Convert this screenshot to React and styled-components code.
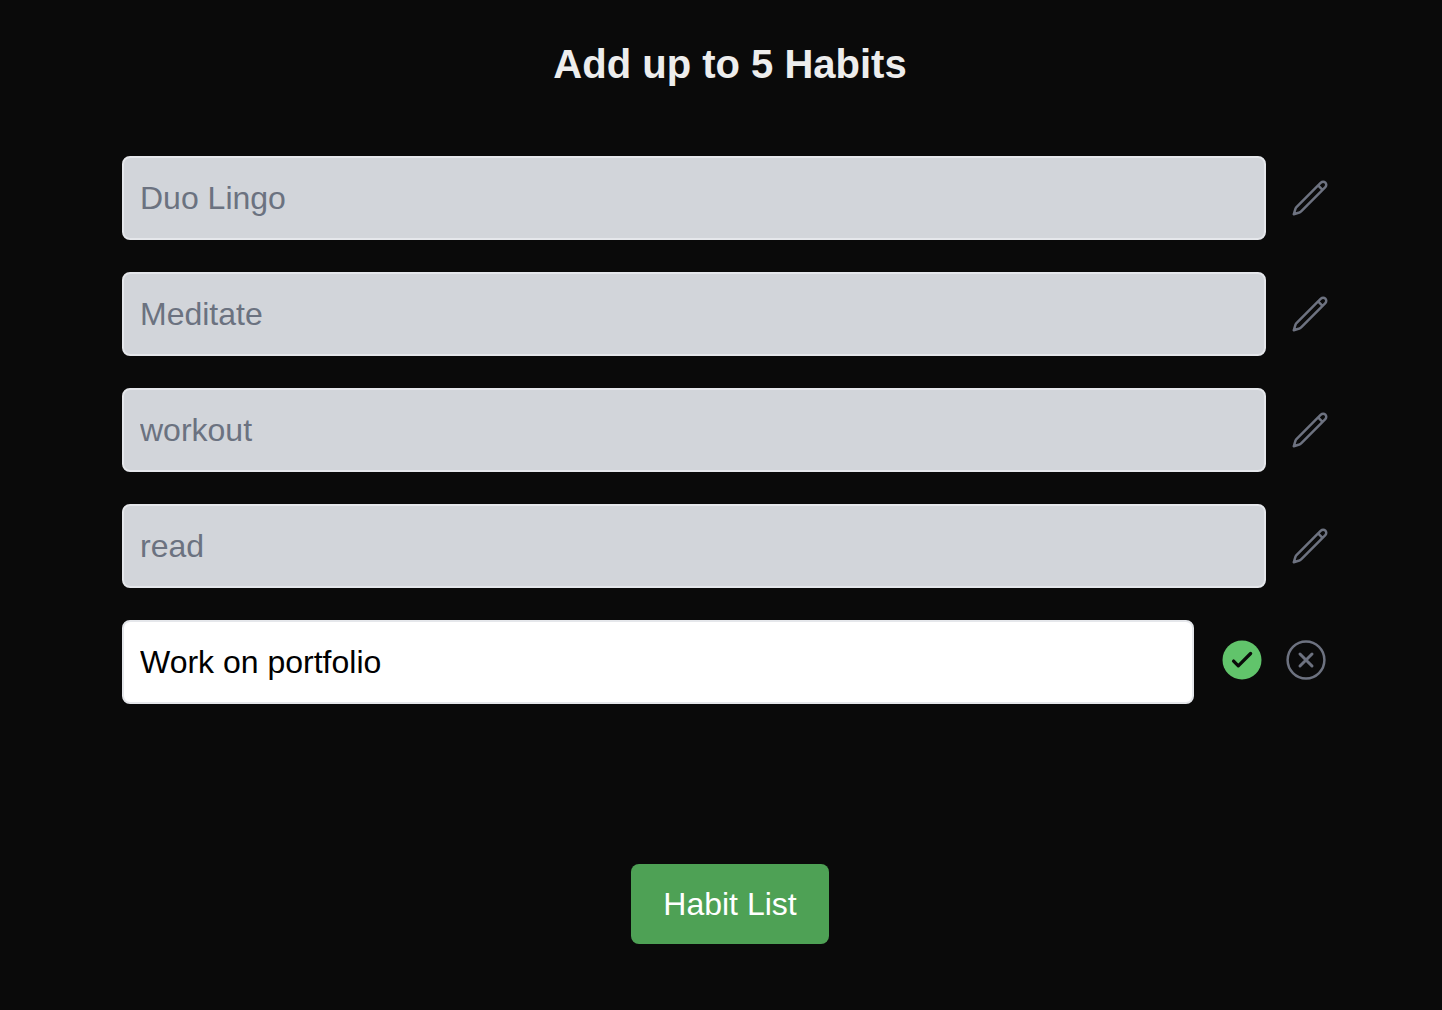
import React, { useState } from "react";
import styled, { createGlobalStyle } from "styled-components";

const GlobalStyle = createGlobalStyle`
  *, *::before, *::after { box-sizing: border-box; }
  body {
    margin: 0;
    background: #0a0a0a;
    color: #ededed;
    font-family: "Liberation Sans", Arial, Helvetica, sans-serif;
  }
`;

const Page = styled.main`
  min-height: 100vh;
  display: flex;
  flex-direction: column;
  align-items: center;
  padding: 36px 104px 64px 122px;
`;

const Title = styled.h1`
  margin: 0;
  font-size: 40px;
  line-height: 56px;
  font-weight: 700;
`;

const HabitList = styled.ul`
  width: 100%;
  margin: 64px 0 160px;
  padding: 0;
  list-style: none;
  display: flex;
  flex-direction: column;
  gap: 32px;
`;

const HabitRow = styled.li`
  display: flex;
  align-items: center;
  gap: 16px;
`;

const HabitInput = styled.input`
  flex: 1;
  min-width: 0;
  height: 84px;
  padding: 16px;
  border: 2px solid #e5e7eb;
  border-radius: 8px;
  outline: none;
  background: #ffffff;
  color: #000000;
  font-family: inherit;
  font-size: 32px;
  line-height: 48px;

  &:disabled {
    background: #d2d5da;
    color: #6b7280;
  }
`;

const Actions = styled.div`
  display: flex;
  padding-bottom: 4px;
`;

const IconButton = styled.button`
  display: flex;
  padding: 8px;
  border: 0;
  background: none;
  color: ${({ $color }) => $color || "#6d7280"};
  font-size: ${({ $size }) => $size}px;
  cursor: pointer;
`;

const Icon = styled.svg`
  width: 1em;
  height: 1em;
  fill: none;
  stroke: currentColor;
  stroke-linecap: round;
  stroke-linejoin: round;
`;

const ListButton = styled.button`
  padding: 16px 32px;
  border: 0;
  border-radius: 8px;
  background: #4ea155;
  color: #ffffff;
  font-family: inherit;
  font-size: 32px;
  line-height: 48px;
  cursor: pointer;
`;

const PencilIcon = () => (
  <Icon viewBox="0 0 24 24" strokeWidth="1.5" aria-hidden="true">
    <path d="M16.862 4.487l1.687-1.688a1.875 1.875 0 1 1 2.652 2.652L6.83 19.82Q6.2 20.45 5.6 20.7L2.25 21.75L3.3 18.4Q3.5 17.85 4.18 17.17L16.862 4.487zm0 0L19.5 7.125" />
  </Icon>
);

const CheckIcon = () => (
  <Icon viewBox="0 0 48 48" aria-hidden="true">
    <circle cx="24" cy="24" r="19.5" fill="currentColor" stroke="none" />
    <path d="M15.6 25.1L20.3 29.8L32.6 17.5" stroke="#0a0a0a" strokeWidth="3.3" />
  </Icon>
);

const CloseIcon = () => (
  <Icon viewBox="0 0 48 48" strokeWidth="2.5" aria-hidden="true">
    <circle cx="24" cy="24" r="18.4" />
    <path d="M18 18L30 30M30 18L18 30" strokeWidth="3" />
  </Icon>
);

const initialHabits = ["Duo Lingo", "Meditate", "workout", "read", "Work on portfolio"];

export default function App() {
  const [habits, setHabits] = useState(initialHabits);
  const [editing, setEditing] = useState(4);

  const rename = (index, value) =>
    setHabits(habits.map((habit, i) => (i === index ? value : habit)));

  return (
    <>
      <GlobalStyle />
      <Page>
        <Title>Add up to 5 Habits</Title>
        <HabitList>
          {habits.map((habit, index) => (
            <HabitRow key={index}>
              <HabitInput
                type="text"
                aria-label={`Habit ${index + 1}`}
                value={habit}
                disabled={editing !== index}
                onChange={(event) => rename(index, event.target.value)}
              />
              {editing === index ? (
                <Actions>
                  <IconButton
                    type="button"
                    aria-label="Save habit"
                    $size={48}
                    $color="#61c46b"
                    onClick={() => setEditing(null)}
                  >
                    <CheckIcon />
                  </IconButton>
                  <IconButton
                    type="button"
                    aria-label="Cancel editing"
                    $size={48}
                    onClick={() => setEditing(null)}
                  >
                    <CloseIcon />
                  </IconButton>
                </Actions>
              ) : (
                <IconButton
                  type="button"
                  aria-label={`Edit ${habit}`}
                  $size={40}
                  onClick={() => setEditing(index)}
                >
                  <PencilIcon />
                </IconButton>
              )}
            </HabitRow>
          ))}
        </HabitList>
        <ListButton type="button">Habit List</ListButton>
      </Page>
    </>
  );
}
